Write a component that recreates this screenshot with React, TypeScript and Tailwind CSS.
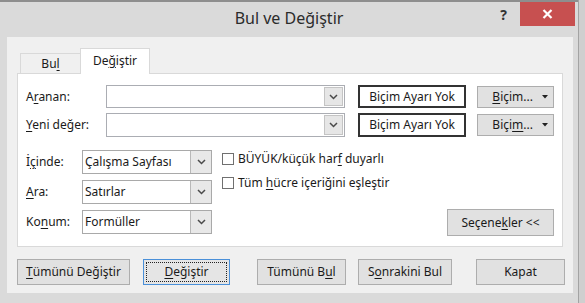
import React from 'react';

const U: React.FC<{ children: React.ReactNode }> = ({ children }) => (
  <span className="underline underline-offset-[2px] decoration-[1px]">{children}</span>
);

const Chevron = () => (
  <svg width="9" height="6" viewBox="0 0 9 6" fill="none">
    <path d="M1 1 L4.5 4.5 L8 1" stroke="#4a4a4a" strokeWidth="1.5" />
  </svg>
);

const ComboInput: React.FC<{ h: string }> = ({ h }) => (
  <div className={`w-[239px] ${h} flex bg-white border border-[#abadb3]`}>
    <div className="flex-1" />
    <div className="w-[19px] m-px bg-[#e6e6e6] border border-[#c4c4c4] flex items-center justify-center">
      <Chevron />
    </div>
  </div>
);

const Select: React.FC<{ label: React.ReactNode; value: string }> = ({ label, value }) => (
  <div className="flex items-center h-[24px]">
    <div className="w-[56px]">{label}</div>
    <div className="w-[130px] h-[24px] flex bg-white border border-[#a9a9a9]">
      <div className="flex-1 pl-[2px] flex items-center">{value}</div>
      <div className="w-[21px] bg-[#e8e8e8] border-l border-[#b8b8b8] flex items-center justify-center">
        <Chevron />
      </div>
    </div>
  </div>
);

const Check: React.FC<{ children: React.ReactNode }> = ({ children }) => (
  <div className="flex items-center h-[12px] gap-[4px]">
    <div className="w-[12px] h-[12px] bg-white border border-[#707070]" />
    <span className="leading-[12px] whitespace-nowrap">{children}</span>
  </div>
);

const Btn: React.FC<{ w: string; ml?: string; children: React.ReactNode }> = ({ w, ml = '', children }) => (
  <div
    className={`${w} ${ml} h-[26px] bg-[#e1e1e1] border border-[#adadad] flex items-center justify-center whitespace-nowrap`}
  >
    {children}
  </div>
);

export default function App() {
  return (
    <div className="w-[585px] h-[303px] flex bg-[#dadada] overflow-hidden font-['Noto_Sans',sans-serif] text-[12px] text-[#1a1a1a]">
      <div className="w-[578px] flex flex-col border-t-2 border-[#8e8e8e]">
        {/* title bar */}
        <div className="h-[35px] grid grid-cols-[1fr_auto_1fr]">
          <div />
          <div className="text-[16px] text-[#2b2b2b] pt-[4px]">Bul ve Değiştir</div>
          <div className="flex justify-end items-start">
            <div className="text-[14px] font-bold text-[#333] mt-[2px] mr-[13px]">?</div>
            <div className="w-[55px] h-[24px] mr-[3px] bg-[#c75050] flex items-center justify-center">
              <svg width="11" height="10" viewBox="0 0 11 10">
                <path d="M1.5 1 L9.5 9 M9.5 1 L1.5 9" stroke="#fff" strokeWidth="2.2" />
              </svg>
            </div>
          </div>
        </div>

        {/* client area */}
        <div className="mx-[7px] w-[566px] h-[256px] bg-[#f0f0f0] flex flex-col">
          <div className="ml-[10px] w-[546px] mt-[11px]">
            {/* tabs */}
            <div className="flex items-end h-[25px] pl-[3px]">
              <div className="w-[60px] h-[20px] bg-[#f0f0f0] border-t border-l border-[#d9d9d9] flex items-center justify-center">
                Bu<U>l</U>
              </div>
              <div className="relative z-10 -mb-px w-[70px] h-[26px] bg-white border-t border-l border-r border-[#d9d9d9] flex items-center justify-center pb-[2px]">
                De<U>ğ</U>iştir
              </div>
            </div>

            {/* panel */}
            <div className="h-[174px] bg-white border border-[#d9d9d9] px-[8px] pt-[11px]">
              <div className="flex items-center h-[23px]">
                <div className="w-[80px]">
                  A<U>r</U>anan:
                </div>
                <ComboInput h="h-[23px]" />
                <div className="ml-[13px] w-[108px] h-[23px] border-2 border-[#333] flex items-center justify-center whitespace-nowrap">
                  Biçim Ayarı Yok
                </div>
                <div className="ml-[11px] w-[77px] h-[22px] bg-[#e1e1e1] border border-[#adadad] flex items-center justify-end pr-[5px] gap-[9px]">
                  <span>
                    <U>B</U>içim...
                  </span>
                  <svg width="6" height="4" viewBox="0 0 6 4">
                    <path d="M0 0 H6 L3 3.5 Z" fill="#222" />
                  </svg>
                </div>
              </div>

              <div className="flex items-center h-[24px] mt-[5px]">
                <div className="w-[80px]">
                  <U>Y</U>eni değer:
                </div>
                <ComboInput h="h-[24px]" />
                <div className="ml-[13px] w-[108px] h-[24px] border-2 border-[#333] flex items-center justify-center whitespace-nowrap">
                  Biçim Ayarı Yok
                </div>
                <div className="ml-[11px] w-[77px] h-[22px] bg-[#e1e1e1] border border-[#adadad] flex items-center justify-end pr-[5px] gap-[9px]">
                  <span>
                    Biçi<U>m</U>...
                  </span>
                  <svg width="6" height="4" viewBox="0 0 6 4">
                    <path d="M0 0 H6 L3 3.5 Z" fill="#222" />
                  </svg>
                </div>
              </div>

              <div className="flex mt-[13px]">
                <div className="flex flex-col gap-[6px]">
                  <Select label={<>İ<U>ç</U>inde:</>} value="Çalışma Sayfası" />
                  <Select label={<><U>A</U>ra:</>} value="Satırlar" />
                  <Select label={<>Ko<U>n</U>um:</>} value="Formüller" />
                </div>
                <div className="ml-[10px] pt-[3px] flex flex-col gap-[12px]">
                  <Check>
                    BÜYÜK/küçük har<U>f</U> duyarlı
                  </Check>
                  <Check>
                    Tüm <U>h</U>ücre içeriğini eşleştir
                  </Check>
                </div>
                <div className="ml-auto pt-[59px]">
                  <div className="w-[107px] h-[27px] bg-[#e1e1e1] border border-[#adadad] flex items-center justify-center">
                    Seçene<U>k</U>ler &lt;&lt;
                  </div>
                </div>
              </div>
            </div>
          </div>

          {/* bottom buttons */}
          <div className="flex pl-[10px] mt-[12px]">
            <Btn w="w-[113px]">
              <U>T</U>ümünü Değiştir
            </Btn>
            <div className="ml-[13px] w-[87px] h-[26px] bg-[#e5e5e5] border border-[#4a90d9] flex p-[2px]">
              <div className="flex-1 border border-dotted border-[#222] flex items-center justify-center">
                <U>D</U>eğiştir
              </div>
            </div>
            <Btn w="w-[89px]" ml="ml-[27px]">
              Tümünü B<U>u</U>l
            </Btn>
            <Btn w="w-[94px]" ml="ml-[12px]">
              S<U>o</U>nrakini Bul
            </Btn>
            <Btn w="w-[89px]" ml="ml-[24px]">
              Kapat
            </Btn>
          </div>
        </div>
      </div>
      <div className="flex-1 bg-[#cfcfcf] border-l border-[#a3a3a3]" />
    </div>
  );
}
